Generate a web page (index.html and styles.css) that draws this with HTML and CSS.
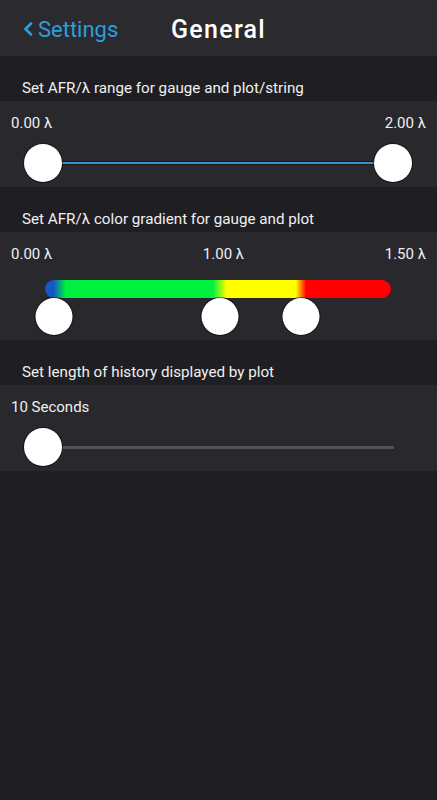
FILE: index.html
```html
<!DOCTYPE html>
<html lang="en">
<head>
<meta charset="utf-8">
<title>General</title>
<link rel="stylesheet" href="styles.css">
</head>
<body>
<header class="topbar">
  <a class="back">
    <svg class="chev" width="10" height="14" viewBox="0 0 10 14"><path d="M8 1.5 L2.5 7 L8 12.5" fill="none" stroke="#2c9fdb" stroke-width="2.6" stroke-linecap="round" stroke-linejoin="round"/></svg>
    <span>Settings</span>
  </a>
  <h1 class="title">General</h1>
  <span></span>
</header>

<div class="section-label">Set AFR/λ range for gauge and plot/string</div>
<div class="card card-range">
  <div class="values"><span>0.00 λ</span><span>2.00 λ</span></div>
  <div class="slider">
    <div class="track track-blue"></div>
    <div class="thumb" style="left:0%"></div>
    <div class="thumb" style="left:100%"></div>
  </div>
</div>

<div class="section-label">Set AFR/λ color gradient for gauge and plot</div>
<div class="card card-gradient">
  <div class="values"><span>0.00 λ</span><span class="mid">1.00 λ</span><span>1.50 λ</span></div>
  <div class="grad-wrap">
    <div class="grad-bar"></div>
    <div class="grad-thumbs">
      <div class="thumb" style="left:2.7%"></div>
      <div class="thumb" style="left:50.6%"></div>
      <div class="thumb" style="left:74%"></div>
    </div>
  </div>
</div>

<div class="section-label">Set length of history displayed by plot</div>
<div class="card card-range">
  <div class="values"><span>10 Seconds</span></div>
  <div class="slider slider-gray">
    <div class="track track-gray"></div>
    <div class="thumb" style="left:0%"></div>
  </div>
</div>
</body>
</html>
```

FILE: styles.css
```css
* { box-sizing: border-box; }
html, body {
  margin: 0;
  padding: 0;
}
body {
  width: 437px;
  min-height: 800px;
  background: #1f1f23;
  color: #f2f2f2;
  font-family: Roboto, "Noto Sans", "Liberation Sans", sans-serif;
}
.topbar {
  height: 56px;
  background: #2a2a2f;
  display: grid;
  grid-template-columns: 1fr auto 1fr;
  align-items: center;
}
.back {
  display: flex;
  align-items: center;
  gap: 5px;
  padding-left: 23px;
  color: #2c9fdb;
  font-size: 22px;
  padding-top: 2px;
}
.chev { display: block; }
.title {
  margin: 0;
  font-size: 25px;
  font-weight: 500;
  letter-spacing: 1.3px;
  color: #ffffff;
  padding-top: 2px;
}
.section-label {
  height: 45px;
  display: flex;
  align-items: flex-end;
  padding: 0 0 4px 22px;
  font-size: 15.2px;
  color: #f0f0f0;
}
.card {
  background: #28282d;
  padding: 13px 11px 0 11px;
}
.card-range { height: 86px; }
.card-gradient { height: 108px; }
.values {
  display: flex;
  justify-content: space-between;
  font-size: 15px;
  line-height: 18px;
  color: #f0f0f0;
}
.values .mid { padding-left: 10px; }
.slider {
  position: relative;
  margin: 12px 33px 0 32px;
  height: 38px;
}
.slider-gray { margin-right: 32px; }
.track {
  position: absolute;
  left: 0;
  right: 0;
  top: 18px;
  height: 2px;
}
.track-blue {
  background: #3a8fcf;
  box-shadow: 0 0 0 1px rgba(0,0,0,0.4);
}
.track-gray {
  background: #505055;
  height: 3px;
}
.thumb {
  position: absolute;
  top: 0;
  width: 38px;
  height: 38px;
  border-radius: 50%;
  background: #ffffff;
  transform: translateX(-50%);
  box-shadow: 0 0 0 1px rgba(0,0,0,0.45);
}
.grad-wrap {
  margin: 17px 35px 0 34px;
}
.grad-bar {
  height: 18px;
  border-radius: 9px;
  background: linear-gradient(to right,
    #1258c6 0%, #1258c6 2.5%,
    #00f040 6%, #00f040 48.5%,
    #ffff00 52.5%, #ffff00 72.5%,
    #ff0000 75.5%, #ff0000 100%);
}
.grad-thumbs {
  position: relative;
  height: 37px;
}
.grad-thumbs .thumb {
  width: 37px;
  height: 37px;
}
```
